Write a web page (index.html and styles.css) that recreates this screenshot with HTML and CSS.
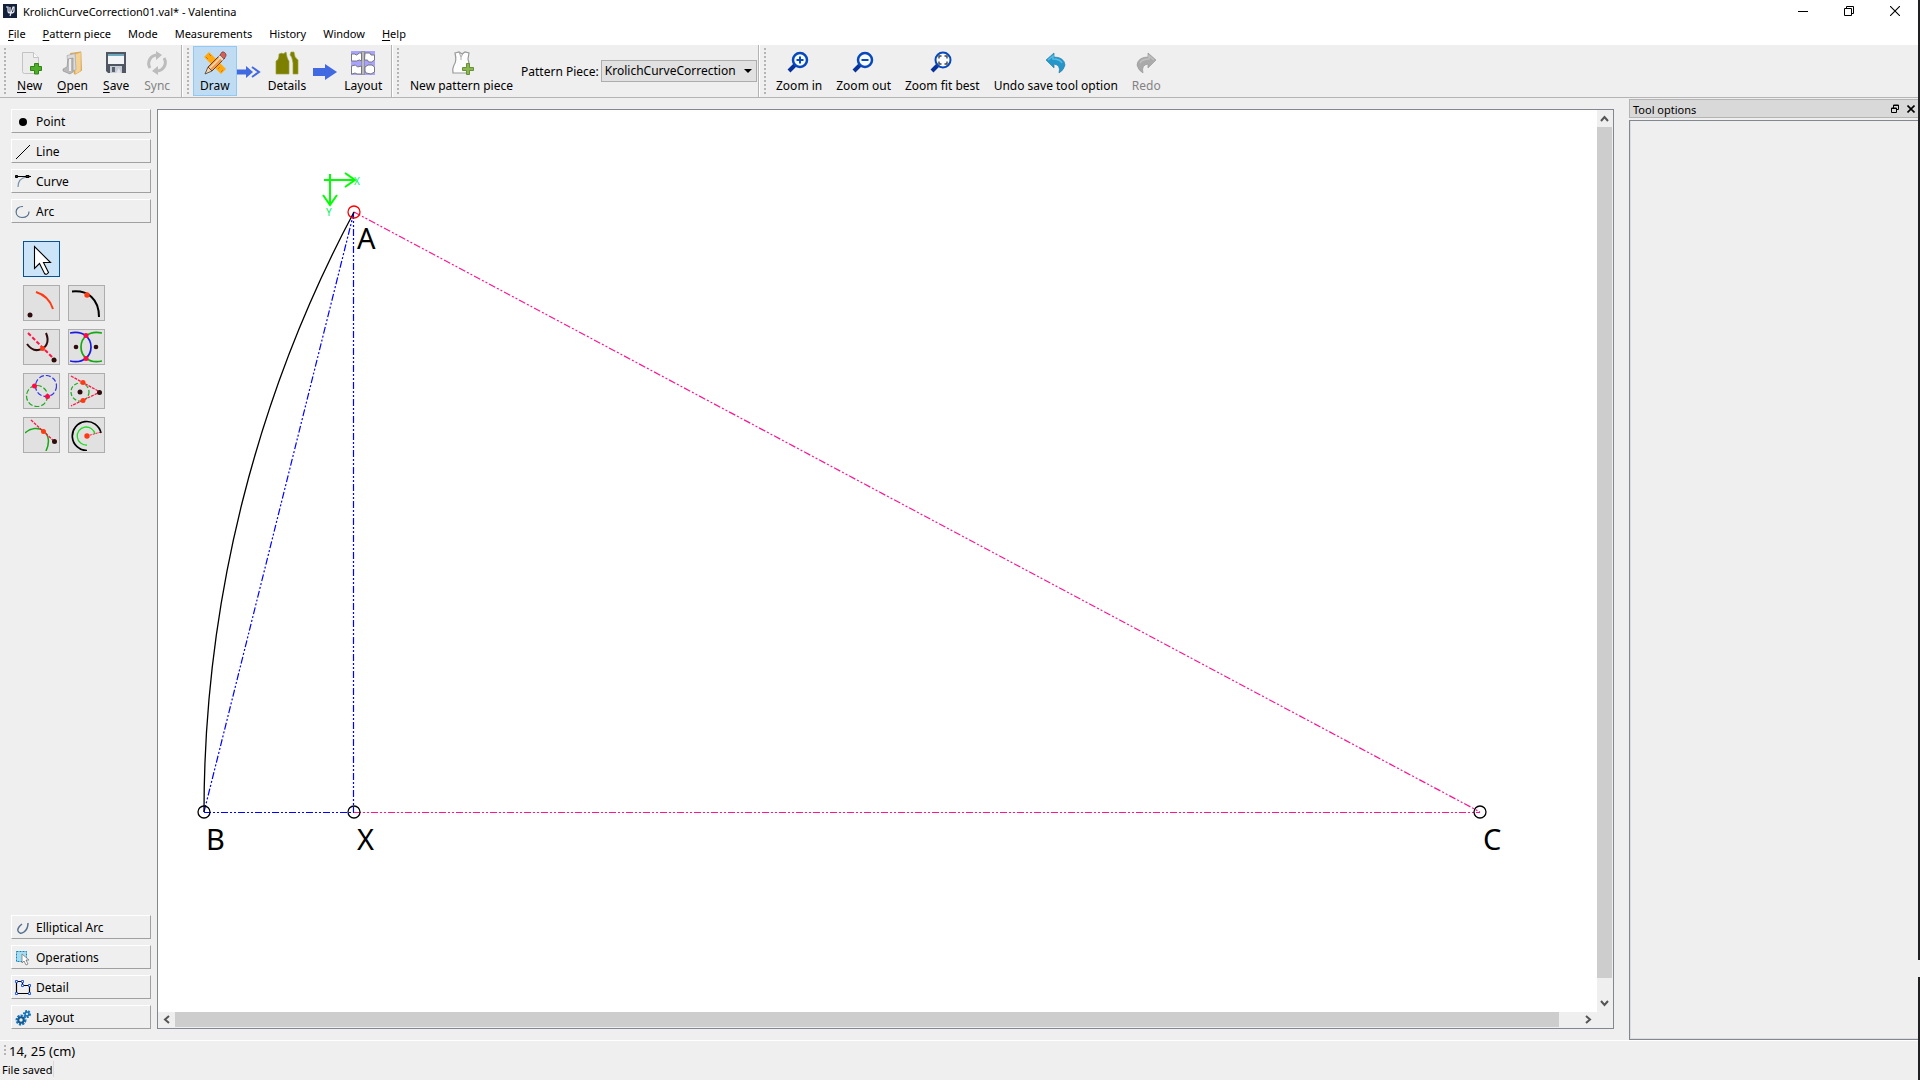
FILE: index.html
```html
<!DOCTYPE html>
<html lang="en">
<head>
<meta charset="utf-8">
<title>KrolichCurveCorrection01.val* - Valentina</title>
<link rel="stylesheet" href="styles.css">
</head>
<body>
<div class="app">
  <header class="titlebar">
    <svg class="logo" width="14" height="14" viewBox="0 0 14 14"><rect width="14" height="14" fill="#14213a"/><path d="M3 3h2v4q0 2 2 2h1l2-6h1v4q0 2-3 2l-1 3M7 3v6" fill="none" stroke="#e8ecf2" stroke-width="1.200"/></svg>
    <span class="title">KrolichCurveCorrection01.val* - Valentina</span>
    <button class="win" aria-label="Minimize"><svg width="10" height="10"><path d="M0 5.500h10" stroke="#000"/></svg></button>
    <button class="win" aria-label="Restore"><svg width="10" height="10" fill="none" stroke="#000"><path d="M.5 2.500h7v7h-7zM2.500 2.500v-2h7v7h-2"/></svg></button>
    <button class="win" aria-label="Close"><svg width="10" height="10"><path d="M0 0l10 10M10 0l-10 10" stroke="#000" stroke-width="1.100"/></svg></button>
  </header>

  <nav class="menubar">
    <button><u>F</u>ile</button>
    <button><u>P</u>attern piece</button>
    <button>Mode</button>
    <button>Measurements</button>
    <button>History</button>
    <button>Window</button>
    <button><u>H</u>elp</button>
  </nav>

  <div class="toolbars">
    <div class="bar bar-file">
      <i class="grip"></i>
      <button class="tb"><svg width="24" height="24"><path d="M4.500 1.500h11l5 5v14q0 2-2 2h-12q-2 0-2-2z" fill="#ececec" stroke="#c3c3c3"/><path d="M15.500 1.500v5h5" fill="#fafafa" stroke="#c3c3c3"/><path d="M12.500 15.500h4v-3h4v3h3v4h-3v3.500h-4v-3.500h-4z" fill="#4fae29" stroke="#318413"/></svg><span><u>N</u>ew</span></button>
      <button class="tb"><svg width="24" height="24"><path d="M9 2l11-1.500 1 19-8 4z" fill="#d8a75a"/><path d="M14 3l6-2v19l-6 3.500z" fill="#f4d293" stroke="#d9a75a" stroke-width=".6"/><path d="M6 4.500l8-2 1 16-7 3z" fill="#dcdcdc" stroke="#aaa" stroke-width=".7"/><path d="M2 18l4-2 1-8 5-1v14l-3 2-7-3z" fill="#b9b9b9" stroke="#8d8d8d" stroke-width=".6"/><path d="M9 8v12" stroke="#eee" stroke-width="2"/></svg><span><u>O</u>pen</span></button>
      <button class="tb"><svg width="24" height="24"><path d="M2 1h20v21H4l-2-2z" fill="#505762"/><path d="M4 3h16v10H4z" fill="#f2f4f5"/><path d="M4 3h16v2H4z" fill="#6ba9ba"/><path d="M6 15h12v7H6z" fill="#c7cbd4"/><path d="M8 16h3v5H8z" fill="#59626f"/><path d="M12 22l3-5 2 5z" fill="#e6e7ee"/></svg><span><u>S</u>ave</span></button>
      <button class="tb off" disabled><svg width="24" height="24" fill="none" stroke="#bcbcbc" stroke-width="3"><path d="M5 17A8.500 8.500 0 0 1 12 4M19 7a8.500 8.500 0 0 1-7 13"/><path d="M11 0l6 4-6 5zM13 15l-6 5 6 4z" fill="#bcbcbc" stroke="none"/></svg><span>Sync</span></button>
    </div>
    <div class="bar bar-mode">
      <i class="grip"></i>
      <button class="tb on"><svg width="24" height="24"><path d="M1 6l5-5 17 17-5 5z" fill="#ffa810"/><path d="M3 6l2 2M6 3l2 2M15 18l2-2M18 21l2-2" stroke="#d47b00"/><path d="M5 16L18 3l4 4L9 20z" fill="#f09a4f" stroke="#5b3415" stroke-width=".9"/><path d="M6.500 17.500l13-13" stroke="#ffe0ac" stroke-width="1.500"/><path d="M5 16l4 4-7 3z" fill="#f3d4ad" stroke="#4b392a" stroke-width=".8"/><path d="M17 4l2-3q2-1 4 2v2l-2 3z" fill="#d4605c" stroke="#773d3a" stroke-width=".7"/><path d="M16 5l4 4" stroke="#ddd" stroke-width="2"/></svg><span>Draw</span></button>
      <svg class="step" width="24" height="12"><path d="M0 3.500h9V0l7 6-7 6V8.500H0z" fill="#4169e1"/><path d="M15 1l7 5-7 5" fill="none" stroke="#4169e1" stroke-width="2"/></svg>
      <button class="tb"><svg width="24" height="24" fill="#7c7f00"><path d="M1 23V10q3-1 3-7l3-1 1 1 3-2 1 5q1 3 2 4v13zM16 1h3q0 5 4 8v14h-5V12q-1-7-3-8z" stroke="#9ea33b" stroke-width=".7"/></svg><span>Details</span></button>
      <svg class="step" width="24" height="16"><path d="M0 4h12V0l12 8-12 8v-4H0z" fill="#4169e1"/></svg>
      <button class="tb"><svg width="24" height="24"><path d="M0 0h24v24H0z" fill="#a9a2ff"/><g fill="#fff" stroke="#77777c" stroke-width="1"><path d="M.500 3h3l2 1 3-2h2v8l-2-1-3 1h-5zM14 2h5l1 2h3.500v5l-3 2h-3l-1-2h-3zM.500 15l4-1 2 2 4-1v8H6l-2-1-3 1h-.500zM14 16l3-2h4l2.500 2v5l-3.500 2-5-1-1-2z"/><path d="M11 0h2v24h-2z"/></g></svg><span>Layout</span></button>
    </div>
    <div class="bar bar-piece">
      <i class="grip"></i>
      <button class="tb"><svg width="24" height="24"><path d="M5 2l4-1 3 2 3-2 4 1-1 6q1 3 1 6v8H3q-1-4 1-8 3-4 1-12z" fill="#fdfdfd" stroke="#999" stroke-width="1.200"/><path d="M9 1l2 5 3-5M11 6v3" fill="none" stroke="#aaa"/><path d="M12.500 16.500h4v-4h3v4h4v3h-4v4h-3v-4h-4z" fill="#8bb650" stroke="#66913a"/></svg><span>New pattern piece</span></button>
      <label class="piece-label" for="piece">Pattern Piece:</label>
      <span class="combo"><select id="piece"><option>KrolichCurveCorrection</option></select><svg class="caret" width="8" height="4"><path d="M0 0h8l-4 4z"/></svg></span>
    </div>
    <div class="bar bar-zoom">
      <i class="grip"></i>
      <button class="tb"><svg width="24" height="24" fill="none" stroke="#0648bd"><path d="M8 14l-6 6" stroke="#06309a" stroke-width="4"/><circle cx="13" cy="9" r="7" fill="#f8fbff" stroke-width="2.500"/><path d="M9.500 9h7M13 5.500v7" stroke-width="2"/></svg><span>Zoom in</span></button>
      <button class="tb"><svg width="24" height="24" fill="none" stroke="#0648bd"><path d="M8 14l-6 6" stroke="#06309a" stroke-width="4"/><circle cx="13" cy="9" r="7" fill="#f8fbff" stroke-width="2.500"/><path d="M9.500 9h7" stroke-width="2"/></svg><span>Zoom out</span></button>
      <button class="tb"><svg width="24" height="24" fill="none" stroke="#0648bd"><path d="M8 14l-6 6" stroke="#06309a" stroke-width="4"/><circle cx="13" cy="9" r="7.500" fill="#f8fbff" stroke-width="2"/><path d="M9 7.500V5h2.500M14.500 5H17v2.500M17 10.500V13h-2.500M11.500 13H9v-2.500" stroke="#444" stroke-width="1.400"/></svg><span>Zoom fit best</span></button>
      <button class="tb"><svg width="24" height="24"><path d="M2 9l8-7v4q10 0 11 8-1 5-6 8 2-8-5-9v4z" fill="#2496ca" stroke="#3080a6" stroke-width=".7"/><path d="M4 9l5-4v3q7 0 9 4" fill="none" stroke="#58bce5" stroke-width="1.500"/></svg><span>Undo save tool option</span></button>
      <button class="tb off" disabled><svg width="24" height="24"><path d="M22 9l-8-7v4Q4 6 3 14q1 5 6 8-2-8 5-9v4z" fill="#aaa" stroke="#999" stroke-width=".7"/><path d="M20 9l-5-4v3q-7 0-9 4" fill="none" stroke="#c0c0c0" stroke-width="1.500"/></svg><span>Redo</span></button>
    </div>
  </div>

  <main class="work">
    <aside class="toolbox">
      <button class="tab"><svg width="16" height="16"><circle cx="8" cy="8" r="4"/></svg>Point</button>
      <button class="tab"><svg width="16" height="16"><path d="M1 15L15 1" stroke="#000"/></svg>Line</button>
      <button class="tab"><svg width="16" height="16" fill="none"><path d="M3 13q0-9 9-10" stroke="#7890a8" stroke-width="1.200"/><path d="M1 2.500h15" stroke="#000"/><path d="M.500 1.500h2v2h-2zM11 1.500h3v2h-3z" fill="#333" stroke="#000"/></svg>Curve</button>
      <button class="tab"><svg width="16" height="16"><path d="M8 2.500C-1 2-1 13 7 13.500q7 0 7-6" fill="none" stroke="#54708c" stroke-width="1.200"/></svg>Arc</button>
      <div class="tools">
        <button class="tool active" aria-label="Pointer"><svg width="32" height="32"><path d="M9.500 3.500v22l5-5 5 10q2 2 4-1l-5-10h7z" fill="#fff" stroke="#000" stroke-width="1.100"/></svg></button>
        <button class="tool" aria-label="Arc"><svg width="32" height="32" fill="none"><path d="M11 5Q24 9 28 22" stroke="#ff3a12" stroke-width="2"/><circle cx="5" cy="28" r="2.500" fill="#300d0d"/></svg></button>
        <button class="tool" aria-label="Point along arc"><svg width="32" height="32" fill="none"><path d="M2 4.500C18 3 29 12 29 30" stroke="#000" stroke-width="2"/><circle cx="17" cy="8" r="2.700" fill="#ff3a12"/></svg></button>
        <button class="tool" aria-label="Arc and axis intersection"><svg width="32" height="32" fill="none"><path d="M21 2c4 9 0 16-8 17q-6 1-11-6" stroke="#300d0d" stroke-width="2"/><path d="M3 2l28 28" stroke="#ff1646" stroke-width="2" stroke-dasharray="4 2"/><circle cx="17.500" cy="17.500" r="2.500" fill="#ff3a12"/><circle cx="29" cy="29" r="2.500" fill="#300d0d"/></svg></button>
        <button class="tool" aria-label="Intersection of arcs"><svg width="32" height="32" fill="none" stroke-width="1.700"><path d="M0 2c28-6 28 34 0 28" stroke="#1b1be0"/><path d="M32 2c-28-6-28 34 0 28" stroke="#15a815"/><g fill="#300d0d"><circle cx="6" cy="16" r="2.300"/><circle cx="26" cy="16" r="2.300"/></g><g fill="#ff0a46"><circle cx="16" cy="4.500" r="2.500"/><circle cx="16" cy="27.500" r="2.500"/></g></svg></button>
        <button class="tool" aria-label="Intersection of circles"><svg width="32" height="32" fill="none" stroke-width="1.200" stroke-dasharray="5 2"><circle cx="21" cy="11" r="10.500" stroke="#3535ed"/><circle cx="12" cy="21" r="10.500" stroke="#1eac1e"/><g fill="#ff0a46"><circle cx="9.500" cy="11" r="2.500"/><circle cx="22.500" cy="21.500" r="2.500"/></g></svg></button>
        <button class="tool" aria-label="Circle tangent"><svg width="32" height="32" fill="none"><circle cx="10" cy="17" r="9" stroke="#1eac1e" stroke-width="1.200" stroke-dasharray="4 2"/><path d="M1 1l29 16L1 31" stroke="#ff1646" stroke-width="1.300" stroke-dasharray="3 1"/><circle cx="10" cy="17" r="2.500" fill="#300d0d"/><circle cx="29.500" cy="17.500" r="2.500" fill="#300d0d"/><g fill="#ff3a12"><circle cx="13" cy="7.500" r="2.500"/><circle cx="13" cy="25.500" r="2.500"/></g></svg></button>
        <button class="tool" aria-label="Arc tangent"><svg width="32" height="32" fill="none"><path d="M0 14C12 3 30 13 21 32" stroke="#15a815" stroke-width="1.500"/><path d="M6 1l25 23" stroke="#ff1646" stroke-width="1.300" stroke-dasharray="3 1"/><circle cx="18.500" cy="12.500" r="2.500" fill="#ff3a12"/><circle cx="29.500" cy="22.500" r="2.500" fill="#300d0d"/></svg></button>
        <button class="tool" aria-label="Arc with length"><svg width="32" height="32" fill="none"><path d="M31 14A14.500 14.500 0 1 0 17 31.500" stroke="#000" stroke-width="1.700"/><path d="M25 15a9 9 0 1 0-8 11" stroke="#20dc20" stroke-width="1.300"/><path d="M17 17l14-4" stroke="#ff1646" stroke-dasharray="2 1"/><circle cx="17" cy="17" r="2.700" fill="#ff3a12"/></svg></button>
      </div>
      <button class="tab"><svg width="16" height="16"><path d="M7 4q-5 4-4 7 2 4 6 1 4-3 4-9" fill="none" stroke="#54708c" stroke-width="1.500"/></svg>Elliptical Arc</button>
      <button class="tab"><svg width="16" height="16"><path d="M1.500 1.500h10v10h-10z" fill="#a4dcf2" stroke="#0d83b8" stroke-dasharray="2 1"/><path d="M7 4v9l2-2 2 4 2-1-2-4h3z" fill="#fff" stroke="#777" stroke-width=".8"/></svg>Operations</button>
      <button class="tab"><svg width="16" height="16" fill="none"><path d="M1.500 13.500v-12h6v4h7v8z" stroke="#000" stroke-width="1.200"/><g fill="#fff" stroke="#2458e8"><path d="M.500.500h2v2h-2zM6.500.500h2v2h-2zM6.500 4.500h2v2h-2zM13.500 4.500h2v2h-2zM.500 12.500h2v2h-2zM13.500 12.500h2v2h-2z"/></g></svg>Detail</button>
      <button class="tab"><svg width="16" height="16" fill="none" stroke="#1674ba"><circle cx="6" cy="10" r="4" stroke-width="3" stroke-dasharray="2 1"/><circle cx="6" cy="10" r="2.700" stroke="#13588f" stroke-width="2"/><circle cx="12" cy="4" r="2.500" stroke-width="3" stroke-dasharray="1.500 1"/><circle cx="12" cy="4" r="2" stroke-width="1.500"/></svg>Layout</button>
    </aside>

    <section class="view">
      <svg class="scene" width="100%" height="100%">
        <g fill="none" stroke="#0f0" stroke-width="2"><path d="M166 70h31M187 63l10 7-10 7M172 64v31M165 85l7 10 7-10"/></g>
        <g class="axis"><text x="196" y="75">X</text><text x="168" y="106">Y</text></g>
        <g fill="none" stroke="#00f" stroke-width="1.200" stroke-dasharray="7 2 2 2 2 2"><path d="M46 702L196 102M195.500 102V702M46 702.500H196"/></g>
        <g fill="none" stroke="#ff1493" stroke-width="1.200" stroke-dasharray="7 2 2 2 2 2"><path d="M196 102L1322 702M196 702.500H1322"/></g>
        <g fill="none" stroke="#000" stroke-width="1.300"><path d="M46 702A1276 1276 0 0 1 196 102"/><circle cx="46" cy="702" r="6"/><circle cx="196" cy="702" r="6"/><circle cx="1322" cy="702" r="6"/><circle cx="196" cy="102" r="6" stroke="#f00"/></g>
        <g class="names"><text x="199" y="139">A</text><text x="48" y="740">B</text><text x="199" y="740">X</text><text x="1325" y="740">C</text></g>
      </svg>
      <div class="scroll vert"><svg width="15" height="17"><path d="M4 11l3.500-4 3.500 4"/></svg><i class="rail"><b></b></i><svg width="15" height="17"><path d="M4 6l3.500 4L11 6"/></svg></div>
      <div class="scroll horz"><svg width="17" height="15"><path d="M11 4L7 7.500l4 3.500"/></svg><i class="rail"><b></b></i><svg width="17" height="15"><path d="M6 4l4 3.500L6 11"/></svg></div>
      <i class="corner"></i>
    </section>

    <aside class="dock">
      <div class="dock-title"><span>Tool options</span>
        <button aria-label="Float"><svg width="8" height="9" fill="none" stroke="#000"><path d="M.500 4h5v4.500h-5zM0 4.500h6M2.500 4V1h5v4.500h-2M2 1.500h6"/></svg></button>
        <button aria-label="Close panel"><svg width="8" height="8"><path d="M.500.500l7 7M7.500.500l-7 7" stroke="#000" stroke-width="1.600"/></svg></button>
      </div>
      <div class="dock-body"></div>
    </aside>
  </main>

  <footer>
    <div class="coords"><i class="grip"></i><span>14, 25 (cm)</span></div>
    <div class="status"><span>File saved</span></div>
  </footer>
</div>
<div class="edge"><i></i></div>
</body>
</html>
```
FILE: styles.css
```css
* { box-sizing: border-box; }
body {
  margin: 0;
  height: 100vh;
  display: flex;
  overflow: hidden;
  background: #efefef;
  color: #000;
  font: 12px/16px "Noto Sans", "Open Sans", sans-serif;
}
button, select { font: inherit; color: inherit; margin: 0; padding: 0; border: 0; background: none; white-space: nowrap; }
svg { display: block; flex: none; }
u { text-underline-offset: 2px; }
.app { flex: 1; min-width: 0; display: flex; flex-direction: column; }

/* right-hand sliver of the desktop behind the window */
.edge { width: 2px; background: #202022; display: flex; flex-direction: column; justify-content: flex-end; padding-bottom: 103px; }
.edge i { height: 17px; background: #efefef; }

.titlebar { height: 22px; background: #fff; display: flex; align-items: center; padding-left: 3px; font-size: 11px; }
.title { flex: 1; margin-left: 6px; padding-top: 1px; }
.win { width: 46px; height: 20px; display: grid; place-items: center; }

.menubar { height: 23px; background: #fff; display: flex; align-items: center; gap: 17px; padding: 0 8px; font-size: 11px; }

.toolbars { height: 53px; display: flex; border-bottom: 1px solid #b4b4b4; }
.bar { display: flex; align-items: center; gap: 1px; padding-left: 4px; border-right: 1px solid #b4b4b4; }
.bar + .bar { border-left: 1px solid #fff; }
.bar-file { width: 182px; }
.bar-mode { width: 210px; }
.bar-piece { width: 367px; }
.bar-zoom { flex: 1; gap: 0; border-right: 0; }
.grip { flex: none; width: 2px; height: 46px; margin-right: 3px; background: repeating-linear-gradient(#b4b4b4 0 2px, transparent 2px 4px); }
.tb { height: 50px; padding: 4px 6px 0; border: 1px solid transparent; display: flex; flex-direction: column; align-items: center; gap: 3px; }
.tb.on { background: #c0dcf3; border-color: #90c8f6; }
.off { color: #838383; }
.step { margin: 2px -1px 0; }
.piece-label { margin: 2px 1px 0 0; white-space: nowrap; }
.combo { position: relative; flex: 1; margin-right: 1px; }
.combo select { display: block; width: 100%; height: 22px; padding-left: 3px; appearance: none; background: #e1e1e1; border: 1px solid #adadad; border-radius: 0; }
.caret { position: absolute; right: 5px; top: 9px; pointer-events: none; }

.work { flex: 1; min-height: 0; display: flex; }
.toolbox { width: 157px; padding: 11px 6px 11px 11px; display: flex; flex-direction: column; gap: 6px; }
.tab { height: 24px; flex: none; display: flex; align-items: center; gap: 5px; padding: 1px 0 0 3px; border: 1px solid; border-color: #fff #a0a0a0 #a0a0a0 #fff; }
.tools { flex: 1; display: grid; grid-template-columns: 37px 37px; grid-auto-rows: 36px; gap: 8px; padding: 12px; }
.tool { border: 1px solid #adadad; background: #e1e1e1; display: grid; place-items: center start; padding-left: 1px; }
.tool.active { grid-column: 1 / 3; width: 37px; background: #cce4f7; border-color: #005499; }

.view { flex: 1; min-width: 0; margin: 11px 15px 11px 0; border: 1px solid #828790; background: #fff; display: grid; grid-template: minmax(0, 1fr) 16px / minmax(0, 1fr) 16px; }
.scene { overflow: hidden; }
.names { font-size: 29px; }
.axis { font-size: 10px; fill: #00f060; }
.scroll, .corner { background: #efefef; }
.scroll { display: flex; align-items: flex-start; }
.scroll svg { fill: none; stroke: #555; stroke-width: 2; }
.scroll b { display: block; background: #cdcdcd; }
.rail { flex: 1; }
.vert { flex-direction: column; }
.vert .rail, .vert b { width: 15px; }
.vert b { height: 98%; }
.horz b { width: 98.5%; height: 15px; }

.dock { width: 289px; display: flex; flex-direction: column; gap: 2px; padding-top: 1px; }
.dock-title { height: 19px; display: flex; align-items: center; gap: 8px; padding: 0 3px; background: #d9d9d9; border: 1px solid #b4b4b4; border-right: 0; }
.dock-title span { flex: 1; padding-top: 2px; font-size: 11px; }
.dock-body { flex: 1; border: 1px solid #828790; border-right: 0; box-shadow: inset 1px -1px #dcdce0; }

footer { height: 40px; border-top: 1px solid #fff; }
.coords { height: 20px; display: flex; align-items: center; padding-left: 4px; font-size: 13px; }
.coords .grip { height: 12px; }
.status { height: 19px; display: flex; padding-left: 2px; font-size: 11px; }
.status span { padding: 1px 1px 0 0; height: 16px; border-right: 1px solid #dadada; }
```
